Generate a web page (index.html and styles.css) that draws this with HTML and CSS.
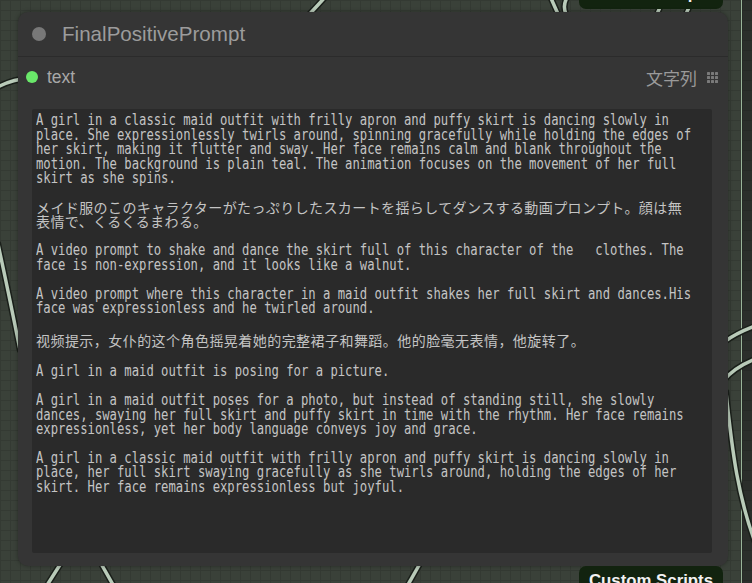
FILE: index.html
```html
<!DOCTYPE html>
<html>
<head>
<meta charset="utf-8">
<link rel="stylesheet" href="styles.css">
</head>
<body>
<div class="canvas">
  <div class="group-edge"></div>
  <svg class="wires" width="752" height="583" viewBox="0 0 752 583">
    <g class="wire-out">
      <path d="M306 18 L328 -6"/>
      <path d="M550 -4 L558 14"/>
      <path d="M568 -4 Q562 5 566 14"/>
      <path d="M661 5 L657 14"/>
      <path d="M690 5 L686 14"/>
      <path d="M-10 92 Q6 80 30 78"/>
      <path d="M-2 244 Q8 290 20 350"/>
      <path d="M63 560 L44 590"/>
      <path d="M99 560 L116 590"/>
      <path d="M422 560 L405 590"/>
      <path d="M724 342 Q738 332 758 325"/>
      <path d="M758 358 Q736 366 724 380"/>
      <path d="M726 392 C732 450 738 500 758 550"/>
    </g>
    <g class="wire-in">
      <path d="M306 18 L328 -6"/>
      <path d="M550 -4 L558 14"/>
      <path d="M568 -4 Q562 5 566 14"/>
      <path d="M661 5 L657 14"/>
      <path d="M690 5 L686 14"/>
      <path d="M-10 92 Q6 80 30 78"/>
      <path d="M-2 244 Q8 290 20 350"/>
      <path d="M63 560 L44 590"/>
      <path d="M99 560 L116 590"/>
      <path d="M422 560 L405 590"/>
      <path d="M724 342 Q738 332 758 325"/>
      <path d="M758 358 Q736 366 724 380"/>
      <path d="M726 392 C732 450 738 500 758 550"/>
    </g>
  </svg>

  <div class="badge badge-top">Custom Scripts</div>

  <div class="node">
    <div class="node-header">
      <span class="title-dot"></span>
      <span class="title">FinalPositivePrompt</span>
    </div>
    <div class="slot-row">
      <span class="slot-dot"></span>
      <span class="slot-label">text</span>
      <span class="slot-type">文字列</span>
      <span class="grip"><i></i><i></i><i></i><i></i><i></i><i></i><i></i><i></i><i></i></span>
    </div>
    <div class="editor">
      <div class="ln">A girl in a classic maid outfit with frilly apron and puffy skirt is dancing slowly in</div>
      <div class="ln">place. She expressionlessly twirls around, spinning gracefully while holding the edges of</div>
      <div class="ln">her skirt, making it flutter and sway. Her face remains calm and blank throughout the</div>
      <div class="ln">motion. The background is plain teal. The animation focuses on the movement of her full</div>
      <div class="ln">skirt as she spins.</div>
      <div class="blank"></div>
      <div class="ja">メイド服のこのキャラクターがたっぷりしたスカートを揺らしてダンスする動画プロンプト。顔は無</div>
      <div class="ja">表情で、くるくるまわる。</div>
      <div class="blank"></div>
      <div class="ln">A video prompt to shake and dance the skirt full of this character of the   clothes. The</div>
      <div class="ln">face is non-expression, and it looks like a walnut.</div>
      <div class="blank"></div>
      <div class="ln">A video prompt where this character in a maid outfit shakes her full skirt and dances.His</div>
      <div class="ln">face was expressionless and he twirled around.</div>
      <div class="blank"></div>
      <div class="zh">视频提示，女仆的这个角色摇晃着她的完整裙子和舞蹈。他的脸毫无表情，他旋转了。</div>
      <div class="blank"></div>
      <div class="ln">A girl in a maid outfit is posing for a picture.</div>
      <div class="blank"></div>
      <div class="ln">A girl in a maid outfit poses for a photo, but instead of standing still, she slowly</div>
      <div class="ln">dances, swaying her full skirt and puffy skirt in time with the rhythm. Her face remains</div>
      <div class="ln">expressionless, yet her body language conveys joy and grace.</div>
      <div class="blank"></div>
      <div class="ln">A girl in a classic maid outfit with frilly apron and puffy skirt is dancing slowly in</div>
      <div class="ln">place, her full skirt swaying gracefully as she twirls around, holding the edges of her</div>
      <div class="ln">skirt. Her face remains expressionless but joyful.</div>
    </div>
  </div>

  <div class="badge badge-bottom">Custom Scripts</div>
</div>
</body>
</html>
```
FILE: styles.css
```css
html, body {
  margin: 0;
  padding: 0;
}
body {
  width: 752px;
  height: 583px;
  overflow: hidden;
  background: #2b2e2b;
  font-family: "Liberation Sans", Arial, sans-serif;
}
.canvas {
  position: relative;
  width: 752px;
  height: 583px;
  overflow: hidden;
  background-color: #3a4139;
  background-image:
    linear-gradient(#343a33 1px, transparent 1px),
    linear-gradient(90deg, #343a33 1px, transparent 1px);
  background-size: 10px 10px;
}
.group-edge {
  position: absolute;
  left: 741px;
  top: 0;
  width: 11px;
  height: 583px;
  border-left: 1px solid #9ab49a;
  background-color: #2b2e2b;
  background-image:
    linear-gradient(#262926 1px, transparent 1px),
    linear-gradient(90deg, #262926 1px, transparent 1px);
  background-size: 10px 10px;
}
.wires {
  position: absolute;
  left: 0;
  top: 0;
}
.wire-out path {
  fill: none;
  stroke: #1a1f1a;
  stroke-width: 6.5;
  stroke-linecap: round;
}
.wire-in path {
  fill: none;
  stroke: #b9cbb9;
  stroke-width: 3.5;
  stroke-linecap: round;
}
.badge {
  position: absolute;
  left: 579px;
  width: 144px;
  height: 30px;
  background: #12230f;
  border-radius: 7px;
  color: #f2f2f2;
  font-weight: bold;
  font-size: 16.8px;
  line-height: 30px;
  text-align: center;
  white-space: nowrap;
}
.badge-top {
  top: -21px;
}
.badge-bottom {
  top: 566px;
}
.node {
  position: absolute;
  left: 18px;
  top: 12px;
  width: 710px;
  height: 554px;
  background: #353535;
  border-radius: 10px;
  box-shadow: 0 0 4px rgba(0, 0, 0, 0.35);
  display: flex;
  flex-direction: column;
}
.node-header {
  height: 44px;
  border-bottom: 1px solid #2b2b2b;
  display: flex;
  align-items: center;
  padding-left: 14px;
}
.title-dot {
  width: 14px;
  height: 14px;
  border-radius: 50%;
  background: #787878;
  margin-right: 16px;
}
.title {
  font-size: 20.6px;
  color: #9c9c9c;
}
.slot-row {
  height: 40px;
  display: flex;
  align-items: center;
  padding: 0 10px 0 8px;
}
.slot-dot {
  width: 12px;
  height: 12px;
  border-radius: 50%;
  background: #6ae86a;
  margin-right: 9px;
}
.slot-label {
  flex: 1;
  font-size: 17.5px;
  color: #a8a8a8;
}
.slot-type {
  font-family: "Noto Sans CJK JP", sans-serif;
  font-size: 17px;
  color: #9a9a9a;
  margin-right: 10px;
}
.grip {
  display: grid;
  grid-template-columns: repeat(3, 3px);
  gap: 1px;
}
.grip i {
  width: 3px;
  height: 3px;
  background: #7a7a7a;
  border-radius: 0.5px;
}
.editor {
  flex: 1;
  margin: 12px 16px 13px 14px;
  padding: 4.3px 4px 0;
  background: #2a2a2a;
  border-radius: 2px;
  overflow: hidden;
  color: #c4c4c4;
}
.ln {
  height: 14.44px;
  line-height: 14.44px;
  white-space: pre;
  font-family: "DejaVu Sans Mono", monospace;
  font-size: 15px;
  transform: scaleX(0.815);
  transform-origin: 0 0;
}
.ja {
  height: 14.44px;
  line-height: 14.44px;
  white-space: pre;
  font-family: "Noto Sans CJK JP", sans-serif;
  font-size: 14px;
  letter-spacing: 0.4px;
}
.zh {
  height: 20px;
  line-height: 20px;
  white-space: pre;
  font-family: "Noto Sans CJK SC", sans-serif;
  font-size: 14px;
  letter-spacing: 0.45px;
}
.blank {
  height: 14.44px;
}
```
